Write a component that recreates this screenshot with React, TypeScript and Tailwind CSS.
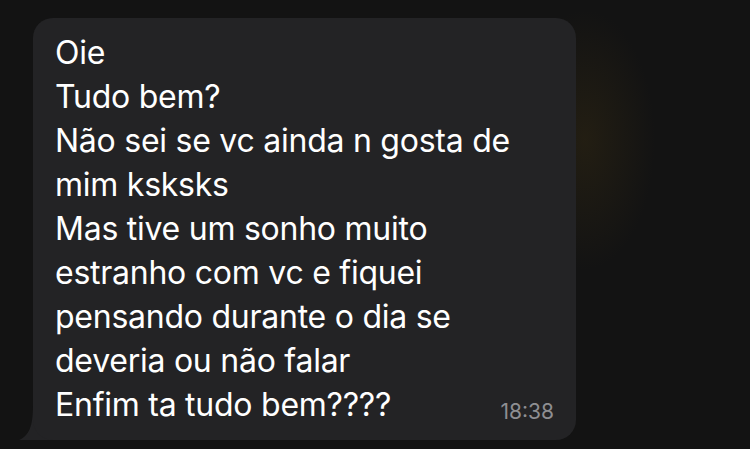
const lines = [
  "Oie",
  "Tudo bem?",
  "Não sei se vc ainda n gosta de",
  "mim ksksks",
  "Mas tive um sonho muito",
  "estranho com vc e fiquei",
  "pensando durante o dia se",
  "deveria ou não falar",
];

const App = () => {
  return (
    <div className="w-[750px] h-[449px] overflow-hidden bg-[#131313] bg-[radial-gradient(ellipse_70px_130px_at_585px_140px,rgba(58,46,18,0.4),transparent)] pt-[18px] pl-[33px] font-['Inter','Liberation_Sans',sans-serif]">
      <div className="relative w-[543px]">
        <div className="relative z-10 rounded-[20px] bg-[#232325] pl-[22px] pr-[22px] pt-[13px] pb-[13px] text-white text-[32px] leading-[44px] tracking-[-0.25px]">
          {lines.map((l) => (
            <div key={l}>{l}</div>
          ))}
          <div className="flex items-end justify-between">
            <span>Enfim ta tudo bem????</span>
            <span className="text-[21px] leading-[28px] text-[#8e8e92] mb-[1px] tracking-normal">18:38</span>
          </div>
        </div>
        <svg className="absolute left-[-14px] bottom-0 z-0" width="40" height="34" viewBox="0 0 40 34">
          <path d="M14 0 L40 0 L40 34 L0 34 C10 30 14 20 14 0 Z" fill="#232325" />
        </svg>
      </div>
    </div>
  );
};

export default App;
